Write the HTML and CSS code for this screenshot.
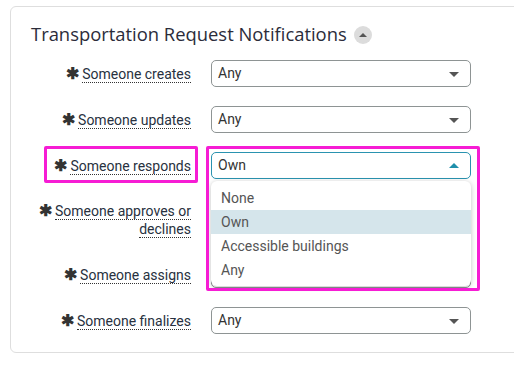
FILE: index.html
```html
<!DOCTYPE html>
<html>
<head>
<meta charset="utf-8">
<link rel="stylesheet" href="styles.css">
</head>
<body>
<section class="panel">
  <h2 class="title">Transportation Request Notifications <span class="toggle"><svg width="18" height="18" viewBox="0 0 18 18"><circle cx="9" cy="9" r="9" fill="#dcdcdc"/><path d="M5 11 L9 7 L13 11 Z" fill="#555"/></svg></span></h2>
  <div class="form">
    <div class="label"><span class="star">✱</span> <span class="txt">Someone creates</span></div>
    <div class="field"><div class="select">Any<span class="caret"></span></div></div>

    <div class="label"><span class="star">✱</span> <span class="txt">Someone updates</span></div>
    <div class="field"><div class="select">Any<span class="caret"></span></div></div>

    <div class="label"><span class="star">✱</span> <span class="txt">Someone responds</span></div>
    <div class="field">
      <div class="select focus">Own<span class="caret up"></span></div>
      <ul class="menu">
        <li>None</li>
        <li class="active">Own</li>
        <li>Accessible buildings</li>
        <li>Any</li>
      </ul>
    </div>

    <div class="label two"><span class="star">✱</span> <span class="txt">Someone approves or</span><br><span class="txt">declines</span></div>
    <div class="field"><div class="select"><span class="caret"></span></div></div>

    <div class="label"><span class="star">✱</span> <span class="txt">Someone assigns</span></div>
    <div class="field"><div class="select"><span class="caret"></span></div></div>

    <div class="label"><span class="star">✱</span> <span class="txt">Someone finalizes</span></div>
    <div class="field"><div class="select">Any<span class="caret"></span></div></div>
  </div>
  <div class="hl hl-label"></div>
  <div class="hl hl-menu"></div>
</section>
</body>
</html>
```

FILE: styles.css
```css
html, body {
  margin: 0;
  padding: 0;
  background: #fff;
  overflow: hidden;
}
body {
  width: 514px;
  height: 367px;
  font-family: Roboto, "Liberation Sans", sans-serif;
}
.panel {
  position: relative;
  margin: 6px 0 0 10px;
  width: 540px;
  box-sizing: border-box;
  border: 1px solid #dedede;
  border-radius: 6px;
  padding: 15px 20px 18px 20px;
}
.title {
  margin: 0 0 14px 0;
  font-family: "Open Sans", sans-serif;
  font-weight: 400;
  font-size: 18.4px;
  line-height: 24px;
  color: #2b2c3a;
  display: flex;
  align-items: center;
  gap: 7px;
}
.toggle {
  display: inline-flex;
  width: 18px;
  height: 18px;
  margin-top: 1px;
}
.form {
  display: grid;
  grid-template-columns: 155px 260px;
  column-gap: 20px;
  row-gap: 19px;
  margin-left: 5px;
  align-items: center;
}
.label {
  text-align: right;
  font-size: 14px;
  line-height: 18px;
  color: #283140;
  padding: 0;
}
.label.two {
  padding: 4px 0;
}
.star {
  font-size: 16px;
  line-height: 14px;
  color: #333;
  font-weight: 700;
}
.txt {
  border-bottom: 1px dotted #333;
}
.field {
  position: relative;
}
.select {
  height: 27px;
  box-sizing: border-box;
  border: 1px solid #8e9494;
  border-radius: 5px;
  padding: 0 0 0 6px;
  font-size: 14px;
  line-height: 25px;
  color: #333;
  position: relative;
  background: #fff;
}
.select.focus {
  border-color: #2a93b0;
}
.caret {
  position: absolute;
  right: 11px;
  top: 11px;
  width: 0;
  height: 0;
  border-left: 5px solid transparent;
  border-right: 5px solid transparent;
  border-top: 5px solid #555;
}
.caret.up {
  top: 10px;
  border-top: 0;
  border-bottom: 5px solid #1f8fab;
}
.menu {
  position: absolute;
  left: 0;
  top: 29px;
  width: 260px;
  box-sizing: border-box;
  margin: 0;
  padding: 5px 0 4px 0;
  list-style: none;
  background: #fff;
  border-radius: 6px;
  box-shadow: 0 1px 5px rgba(0, 0, 0, 0.25);
  z-index: 2;
}
.menu li {
  height: 24px;
  line-height: 24px;
  padding-left: 10px;
  font-size: 14px;
  color: #555;
}
.menu li.active {
  background: #d5e5eb;
}
.hl {
  position: absolute;
  border: 3px solid #f61cd4;
  border-radius: 2px;
  box-sizing: border-box;
  z-index: 3;
}
.hl-label {
  left: 33px;
  top: 139px;
  width: 154px;
  height: 37px;
}
.hl-menu {
  left: 195px;
  top: 139px;
  width: 274px;
  height: 145px;
}
```
